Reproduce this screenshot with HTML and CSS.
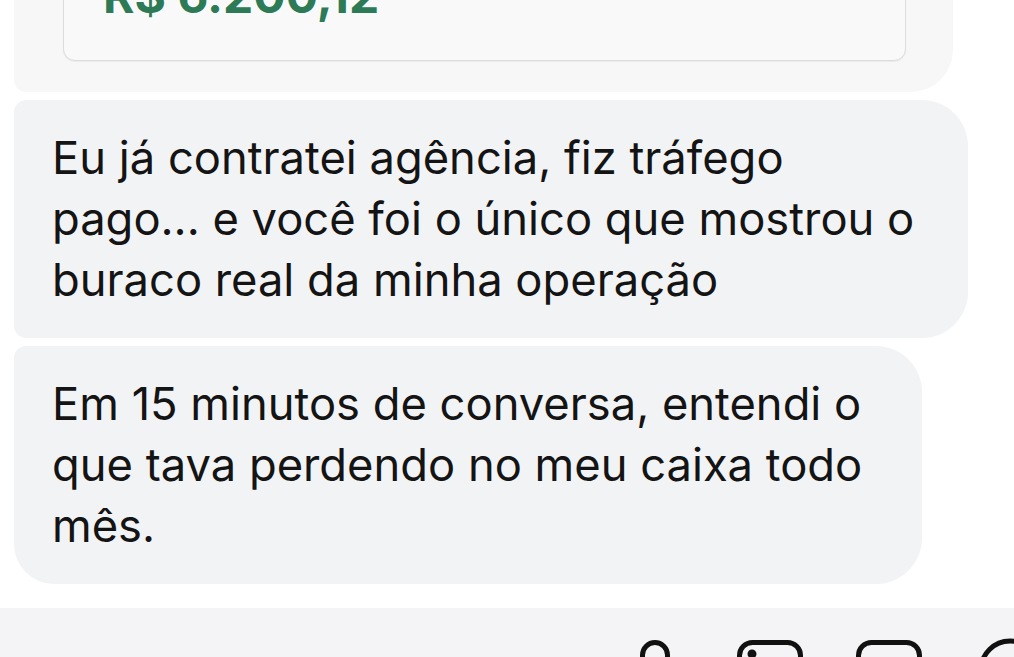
FILE: index.html
```html
<!DOCTYPE html>
<html lang="pt-BR">
<head>
<meta charset="UTF-8">
<meta name="viewport" content="width=device-width, initial-scale=1.0">
<title>Depoimentos</title>
<link rel="stylesheet" href="styles.css">
</head>
<body>

<div class="chat">

    <div class="bubble bubble-result">
        <div class="result-card">
            <div class="amount">R$ 6.200,12</div>
        </div>
    </div>

    <div class="bubble bubble-one">
        <p>Eu já contratei agência, fiz tráfego<br>
        pago... e você foi o único que mostrou o<br>
        buraco real da minha operação</p>
    </div>

    <div class="bubble bubble-two">
        <p>Em 15 minutos de conversa, entendi o<br>
        que tava perdendo no meu caixa todo<br>
        mês.</p>
    </div>

</div>

<div class="toolbar">
    <div class="tools">
        <svg class="tool tool-mic" width="30" height="50" viewBox="0 0 30 50">
            <rect x="2.5" y="2.5" width="25" height="40" rx="12.5" fill="none" stroke="#111" stroke-width="5"/>
        </svg>
        <svg class="tool tool-photo" width="66" height="50" viewBox="0 0 66 50">
            <rect x="2.5" y="2.5" width="61" height="44" rx="13" fill="none" stroke="#111" stroke-width="5"/>
            <circle cx="15" cy="14" r="4.5" fill="#111"/>
        </svg>
        <svg class="tool tool-card" width="66" height="50" viewBox="0 0 66 50">
            <rect x="2.5" y="2.5" width="61" height="44" rx="13" fill="none" stroke="#111" stroke-width="5"/>
        </svg>
        <svg class="tool tool-face" width="64" height="64" viewBox="0 0 64 64">
            <circle cx="32" cy="32" r="29" fill="none" stroke="#111" stroke-width="5"/>
        </svg>
    </div>
</div>

</body>
</html>
```

FILE: styles.css
```css
*{
    box-sizing:border-box;
}

body{
    margin:0;
    height:657px;
    overflow:hidden;
    background:#fff;
    font-family:Inter, "Noto Sans", Arial, sans-serif;
    color:#141414;
}

.chat{
    display:flex;
    flex-direction:column;
    align-items:flex-start;
    gap:8px;
    padding:0 14px;
    margin-top:-61px;
}

.bubble{
    background:#f2f3f5;
}

.bubble p{
    margin:0;
    font-size:45.3px;
    line-height:61px;
    white-space:nowrap;
}

/* tarjeta anterior con el valor */
.bubble-result{
    width:939px;
    background:#f7f7f8;
    border-radius:12px 12px 42px 12px;
    padding:20px 47px 31px 49px;
}

.result-card{
    background:#f9f9f9;
    border:1.5px solid #dcdcdc;
    border-radius:12px;
    padding:14px 40px 42px 39px;
    box-shadow:0 1px 1px rgba(0,0,0,0.05);
}

.amount{
    font-size:48px;
    line-height:44px;
    font-weight:700;
    color:#2d7a57;
}

.bubble-one{
    width:954px;
    border-radius:12px 46px 46px 12px;
    padding:27px 30px 28px 38px;
}

.bubble-two{
    width:908px;
    border-radius:12px 46px 46px 40px;
    padding:27px 30px 28px 38px;
}

/* barra inferior */
.toolbar{
    margin-top:24px;
    height:60px;
    background:#f4f4f6;
    overflow:hidden;
}

.tools{
    display:flex;
    align-items:flex-start;
    padding:32px 0 0 640px;
}

.tool{
    flex-shrink:0;
    display:block;
}

.tool-photo{
    margin-left:67px;
}

.tool-card{
    margin-left:53px;
}

.tool-face{
    margin-left:56px;
    margin-top:-2px;
}
```
